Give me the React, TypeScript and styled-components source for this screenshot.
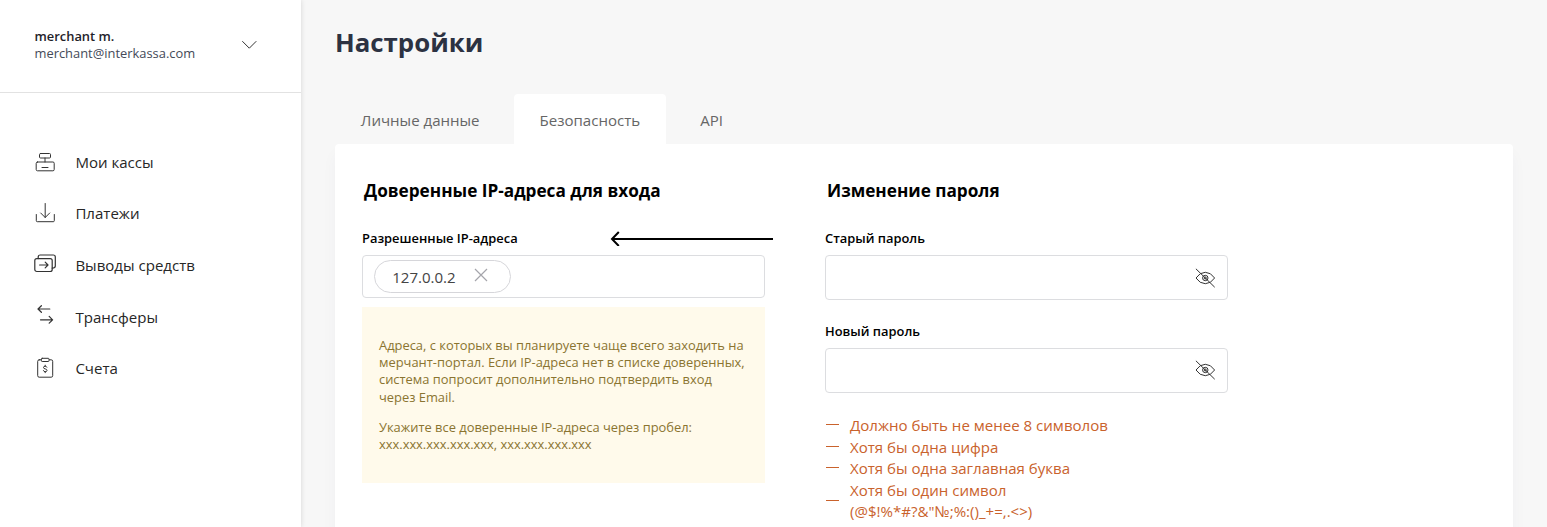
import React from 'react';
import styled, { createGlobalStyle } from 'styled-components';

const GlobalStyle = createGlobalStyle`
  * { box-sizing: border-box; }
  body { margin: 0; background: #f7f7f7; font-family: 'Open Sans', 'Noto Sans', sans-serif; }
  svg { display: block; }
`;

const Page = styled.div`
  display: flex;
  height: 527px;
  overflow: hidden;
  background: #f7f7f7;
`;

const Sidebar = styled.aside`
  flex: none;
  width: 301px;
  background: #fff;
  box-shadow: 0 0 5px rgba(0, 0, 0, 0.14);
`;

const Account = styled.header`
  display: flex;
  justify-content: space-between;
  height: 93px;
  padding: 28px 43px 0 34.5px;
  border-bottom: 1px solid #e2e2e2;
`;

const AccountName = styled.div`
  font-size: 12.9px;
  font-weight: 600;
  line-height: 17.2px;
  color: #1f2229;
`;

const AccountMail = styled.div`
  font-size: 12.9px;
  line-height: 17.2px;
  color: #444a58;
`;

const ChevronSlot = styled.span`
  padding-top: 12px;
`;

const Menu = styled.nav`
  display: flex;
  flex-direction: column;
  padding-top: 43px;
`;

const MenuItem = styled.a`
  display: flex;
  align-items: center;
  gap: 18.4px;
  height: 51.6px;
  padding-left: 33px;
  font-size: 15.05px;
  line-height: 22px;
  color: #272727;
`;

const Main = styled.main`
  flex: 1;
  padding: 24px 34px 0 34px;
`;

const Title = styled.h1`
  margin: 0;
  font-size: 25.8px;
  font-weight: 700;
  line-height: 36px;
  color: #2c3242;
`;

const Tabs = styled.div`
  display: flex;
  margin-top: 34px;
`;

const Tab = styled.div<{ $active?: boolean }>`
  height: 50px;
  padding: 0 25.8px;
  margin-right: 8.4px;
  border-radius: 4px 4px 0 0;
  font-size: 15.05px;
  line-height: 53px;
  color: #666;
  background: ${(p) => (p.$active ? '#fff' : 'transparent')};
`;

const Panel = styled.section`
  display: flex;
  gap: 60px;
  height: 420px;
  padding: 35px 27px;
  border-radius: 4px;
  background: #fff;
  box-shadow: 0 10px 16px rgba(40, 60, 110, 0.035);
`;

const Column = styled.div`
  flex: none;
  width: 403px;
`;

const Heading = styled.h2`
  margin: 0 0 0 2px;
  font-size: 17.2px;
  font-weight: 700;
  line-height: 24px;
  color: #000;
`;

const LabelRow = styled.div<{ $top: number }>`
  display: flex;
  align-items: center;
  justify-content: space-between;
  height: 18px;
  margin-top: ${(p) => p.$top}px;
  margin-right: -8px;
`;

const Label = styled.label`
  font-size: 12.9px;
  font-weight: 600;
  line-height: 18px;
  color: #000;
`;

const Field = styled.div<{ $height: number; $end?: boolean }>`
  display: flex;
  align-items: center;
  justify-content: ${(p) => (p.$end ? 'flex-end' : 'flex-start')};
  height: ${(p) => p.$height}px;
  margin-top: 8px;
  padding: 0 11px;
  border: 1px solid #dcdde0;
  border-radius: 4px;
  background: #fff;
`;

const Chip = styled.span`
  display: flex;
  align-items: center;
  width: 136.5px;
  height: 33px;
  padding: 0 22px 0 17.2px;
  justify-content: space-between;
  border: 1px solid #d6d6da;
  border-radius: 17px;
  font-size: 15.05px;
  color: #444;
  svg { margin-top: -4px; }
`;

const Note = styled.div`
  height: 176px;
  margin-top: 9px;
  padding: 30px 17px;
  background: #fffaeb;
  font-size: 12.9px;
  line-height: 17.2px;
  color: #8a7430;
  white-space: nowrap;
  p { margin: 0 0 13px; }
`;

const Rules = styled.ul`
  margin: 22.5px 0 0;
  padding: 0;
  list-style: none;
`;

const Rule = styled.li`
  display: flex;
  align-items: center;
  gap: 11px;
  padding-left: 1px;
  font-size: 15.05px;
  line-height: 21.5px;
  color: #c9622c;
  &::before {
    content: '';
    flex: none;
    width: 13px;
    height: 1px;
    margin-top: -2px;
    background: currentColor;
  }
`;

const Icon = ({ children }: { children: React.ReactNode }) => (
  <svg width="24" height="24" viewBox="0 0 24 24" fill="none" stroke="#333" strokeWidth="1" strokeLinecap="round" strokeLinejoin="round">
    {children}
  </svg>
);

const menu = [
  {
    label: 'Мои кассы',
    icon: (
      <Icon>
        <rect x="6.5" y="3.5" width="11" height="4.5" rx="1" />
        <path d="M12 8v4M9 17.5h6" />
        <rect x="3.2" y="12" width="18" height="8.8" rx="1.3" />
      </Icon>
    ),
  },
  {
    label: 'Платежи',
    icon: (
      <Icon>
        <path d="M12.2 2.5v14M7.7 12l4.5 4.5 4.5-4.5" />
        <path d="M3.3 13.5v6.2q0 1 1 1h16q1 0 1-1v-6.2" />
      </Icon>
    ),
  },
  {
    label: 'Выводы средств',
    icon: (
      <Icon>
        <g strokeWidth="1.2">
          <rect x="1.8" y="5.6" width="17.4" height="12.9" rx="2" />
          <path d="M5.2 5.6V3.9q0-1.9 1.9-1.9H20.4q1.9 0 1.9 1.9v9q0 2-3.1 2.3M6.6 12h8.4M12.2 9.2L15 12l-2.8 2.8" />
        </g>
      </Icon>
    ),
  },
  {
    label: 'Трансферы',
    icon: (
      <Icon>
        <g strokeWidth="1.2">
          <path d="M16.8 4H5M8.4.7L5 4l3.4 3.3M7.5 14.8h12.1M16.2 11.4l3.4 3.4-3.4 3.4" />
        </g>
      </Icon>
    ),
  },
  {
    label: 'Счета',
    icon: (
      <Icon>
        <rect x="4.7" y="3.8" width="15" height="17.4" rx="1.5" />
        <rect x="8.4" y="2.3" width="7.6" height="3.2" rx="0.8" fill="#fff" />
        <path d="M13.9 11.2q-.4-1-1.7-1-1.7 0-1.7 1.3 0 1.1 1.7 1.4 1.8.3 1.8 1.5 0 1.3-1.8 1.3-1.5 0-1.8-1.1M12.2 9.2v1M12.2 15.7v1" />
      </Icon>
    ),
  },
];

const EyeOff = () => (
  <svg width="22" height="22" viewBox="0 0 22 22" fill="none" stroke="#333" strokeWidth="1">
    <path d="M2 11Q5.8 5.3 11.3 5.3T20.6 11Q16.8 16.7 11.3 16.7T2 11ZM1.9 1.8L20.7 20.2" />
    <circle cx="11.3" cy="11" r="2.7" />
    <circle cx="11.3" cy="11" r="1" />
  </svg>
);

export default function App() {
  return (
    <>
      <GlobalStyle />
      <Page>
        <Sidebar>
          <Account>
            <div>
              <AccountName>merchant m.</AccountName>
              <AccountMail>merchant@interkassa.com</AccountMail>
            </div>
            <ChevronSlot>
              <svg width="17" height="10" viewBox="0 0 17 10" fill="none" stroke="#333" strokeWidth="1">
                <path d="M1.3 1.2l7 7 7-7" />
              </svg>
            </ChevronSlot>
          </Account>
          <Menu>
            {menu.map((m) => (
              <MenuItem key={m.label}>
                {m.icon}
                {m.label}
              </MenuItem>
            ))}
          </Menu>
        </Sidebar>
        <Main>
          <Title>Настройки</Title>
          <Tabs>
            <Tab>Личные данные</Tab>
            <Tab $active>Безопасность</Tab>
            <Tab>API</Tab>
          </Tabs>
          <Panel>
            <Column>
              <Heading>Доверенные IP-адреса для входа</Heading>
              <LabelRow $top={26}>
                <Label>Разрешенные IP-адреса</Label>
                <svg width="163" height="16" viewBox="0 0 163 16" fill="none" stroke="#000" strokeWidth="2">
                  <path d="M163 9H2M8.8 2L2 9l6.8 7" />
                </svg>
              </LabelRow>
              <Field $height={43}>
                <Chip>
                  127.0.0.2
                  <svg width="14" height="14" viewBox="0 0 14 14" fill="none" stroke="#a5a5ab" strokeWidth="1.2">
                    <path d="M1 1l12 12M13 1L1 13" />
                  </svg>
                </Chip>
              </Field>
              <Note>
                <p>
                  Адреса, с которых вы планируете чаще всего заходить на
                  <br />
                  мерчант-портал. Если IP-адреса нет в списке доверенных,
                  <br />
                  система попросит дополнительно подтвердить вход
                  <br />
                  через Email.
                </p>
                <p>
                  Укажите все доверенные IP-адреса через пробел:
                  <br />
                  xxx.xxx.xxx.xxx.xxx, xxx.xxx.xxx.xxx
                </p>
              </Note>
            </Column>
            <Column>
              <Heading>Изменение пароля</Heading>
              <LabelRow $top={26}>
                <Label>Старый пароль</Label>
              </LabelRow>
              <Field $height={45} $end>
                <EyeOff />
              </Field>
              <LabelRow $top={21.5}>
                <Label>Новый пароль</Label>
              </LabelRow>
              <Field $height={45} $end>
                <EyeOff />
              </Field>
              <Rules>
                <Rule>Должно быть не менее 8 символов</Rule>
                <Rule>Хотя бы одна цифра</Rule>
                <Rule>Хотя бы одна заглавная буква</Rule>
                <Rule>
                  Хотя бы один символ
                  <br />
                  (@$!%*#?&amp;"№;%:()_+=,.&lt;&gt;)
                </Rule>
              </Rules>
            </Column>
          </Panel>
        </Main>
      </Page>
    </>
  );
}
